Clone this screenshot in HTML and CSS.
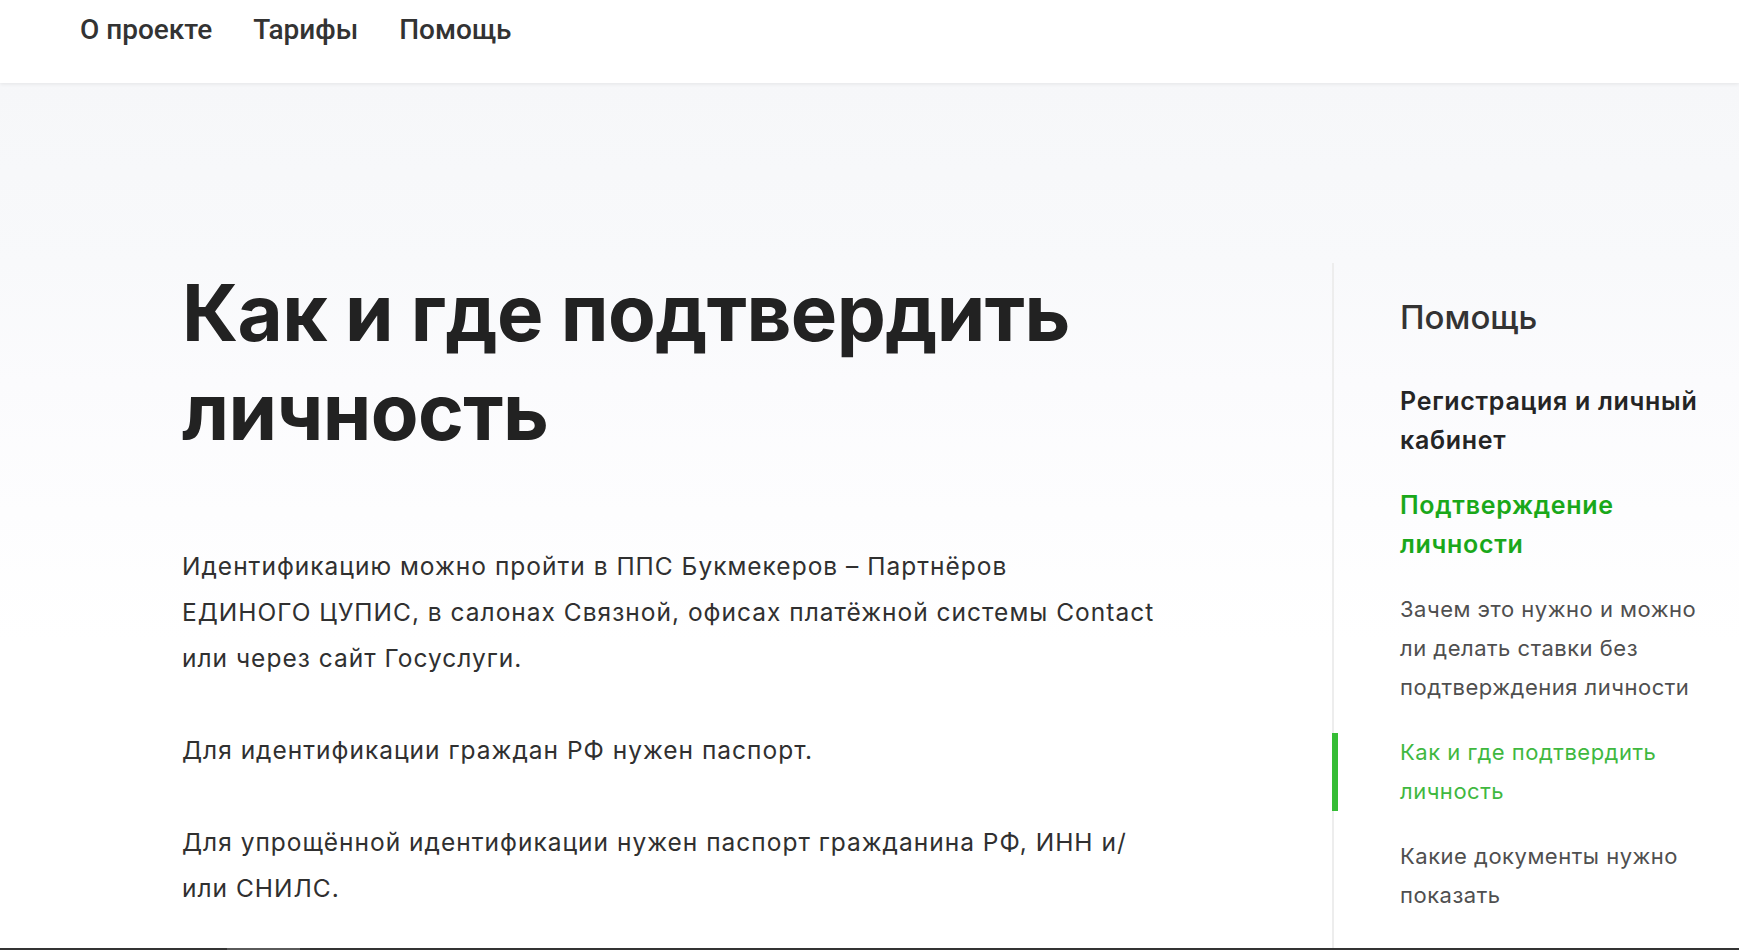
FILE: index.html
```html
<!DOCTYPE html>
<html lang="ru">
<head>
<meta charset="utf-8">
<title>Как и где подтвердить личность</title>
<link rel="stylesheet" href="styles.css">
</head>
<body>
<header class="topbar">
  <nav class="topnav">
    <a class="topnav-link" href="#">О проекте</a>
    <a class="topnav-link" href="#">Тарифы</a>
    <a class="topnav-link" href="#">Помощь</a>
  </nav>
</header>
<main class="page">
  <div class="layout">
    <article class="article">
      <h1 class="article-title">Как и где подтвердить личность</h1>
      <p class="article-text">Идентификацию можно пройти в ППС Букмекеров – Партнёров ЕДИНОГО&nbsp;ЦУПИС, в салонах Связной, офисах платёжной системы Contact или через сайт Госуслуги.</p>
      <p class="article-text">Для идентификации граждан РФ нужен паспорт.</p>
      <p class="article-text">Для упрощённой идентификации нужен паспорт гражданина РФ, ИНН и/или СНИЛС.</p>
    </article>
    <aside class="sidebar">
      <h2 class="sidebar-title">Помощь</h2>
      <ul class="side-menu">
        <li class="side-item side-item-parent"><a href="#">Регистрация и личный кабинет</a></li>
        <li class="side-item side-item-parent side-item-open"><a href="#">Подтверждение личности</a></li>
        <li class="side-item side-item-child"><a href="#">Зачем это нужно и можно ли делать ставки без подтверждения личности</a></li>
        <li class="side-item side-item-child side-item-current"><a href="#">Как и где подтвердить личность</a></li>
        <li class="side-item side-item-child"><a href="#">Какие документы нужно показать</a></li>
      </ul>
    </aside>
  </div>
</main>
<div class="bottom-edge"><span class="bottom-edge-thumb"></span></div>
</body>
</html>
```
FILE: styles.css
```css
* { box-sizing: border-box; }

html, body {
  margin: 0;
  padding: 0;
  height: 100%;
  overflow: hidden;
}

body {
  font-family: Inter, "Noto Sans", "Liberation Sans", sans-serif;
  color: #2b2b2b;
  background: #ffffff;
  position: relative;
}

a { text-decoration: none; color: inherit; }

.topbar {
  height: 83px;
  background: #ffffff;
  box-shadow: 0 1px 4px rgba(0, 0, 0, 0.08);
  position: relative;
  z-index: 2;
  display: flex;
  align-items: flex-start;
}

.topnav {
  display: flex;
  gap: 41px;
  padding-left: 80px;
  padding-top: 11px;
}

.topnav-link {
  font-family: Roboto, "Liberation Sans", sans-serif;
  font-size: 28px;
  font-weight: 500;
  line-height: 38px;
  color: #333333;
}

.page {
  background: linear-gradient(to bottom, #f6f7f9 0px, #f8f9fb 180px, #fbfbfd 300px, #ffffff 560px);
  min-height: calc(100% - 83px);
  padding-top: 180px;
}

.layout {
  display: flex;
  align-items: stretch;
}

.article {
  width: 1332px;
  padding-left: 182px;
  padding-right: 170px;
}

.article-title {
  margin: 0 0 82px;
  font-size: 78px;
  font-weight: 700;
  line-height: 99px;
  letter-spacing: -0.6px;
  color: #222222;
}

.article-text {
  margin: 0 0 46px;
  font-size: 24.5px;
  line-height: 46px;
  color: #303030;
  letter-spacing: 1px;
}

.sidebar {
  flex: 1;
  border-left: 2px solid #ededed;
  padding: 34px 36px 0 66px;
  min-height: 700px;
}

.sidebar-title {
  margin: 0 0 45px;
  font-size: 33px;
  font-weight: 500;
  line-height: 40px;
  color: #333333;
}

.side-menu {
  list-style: none;
  margin: 0;
  padding: 0;
  display: flex;
  flex-direction: column;
  gap: 26px;
}

.side-item {
  position: relative;
  line-height: 39px;
}

.side-item-parent {
  font-size: 25px;
  font-weight: 600;
  letter-spacing: 0.7px;
  color: #252525;
}

.side-item-open {
  color: #1aa81a;
}

.side-item-child {
  font-size: 22px;
  font-weight: 400;
  color: #4f4f4f;
  letter-spacing: 0.5px;
}

.side-item-current {
  color: #3fb83f;
}

.side-item-current::before {
  content: "";
  position: absolute;
  left: -68px;
  top: 0;
  bottom: 0;
  width: 6px;
  background: #35bd35;
}

.bottom-edge {
  position: absolute;
  left: 0;
  right: 0;
  bottom: 0;
  height: 2px;
  background: #343434;
}

.bottom-edge-thumb {
  position: absolute;
  left: 227px;
  width: 73px;
  top: 0;
  bottom: 0;
  background: #5a5a5a;
}
```
